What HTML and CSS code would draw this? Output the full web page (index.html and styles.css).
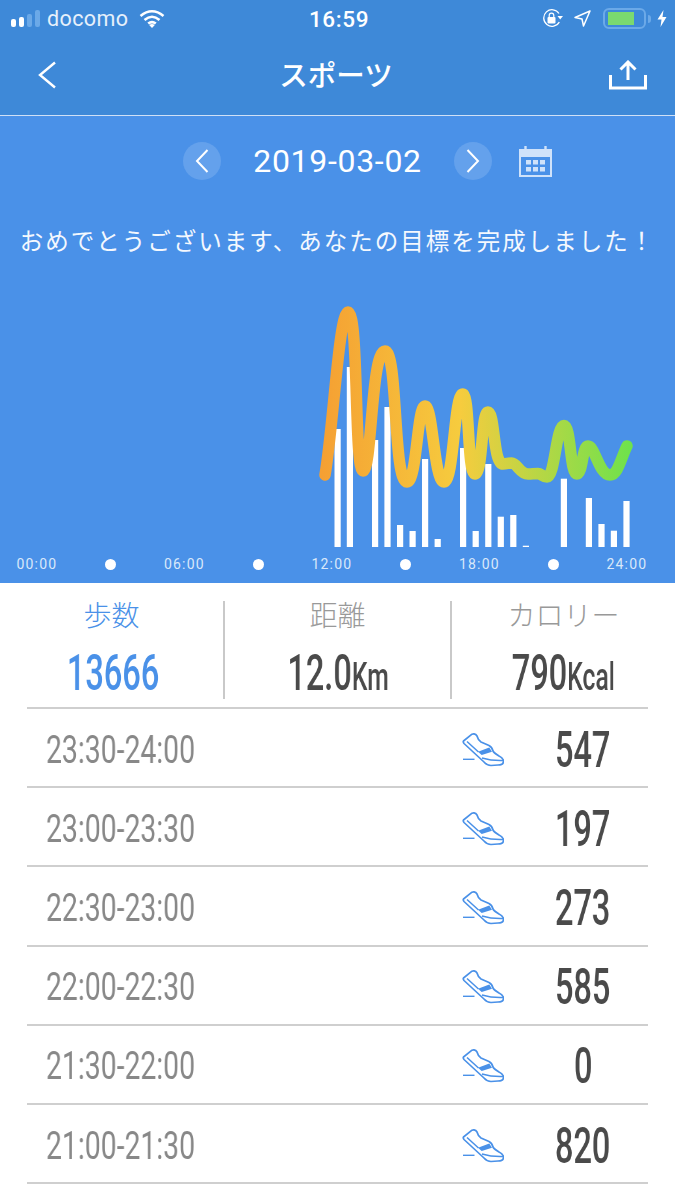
FILE: index.html
```html
<!DOCTYPE html>
<html lang="ja">
<head>
<meta charset="utf-8">
<title>スポーツ</title>
<link rel="stylesheet" href="styles.css">
</head>
<body>
<svg class="defs" width="0" height="0" aria-hidden="true">
  <symbol id="shoe" viewBox="0 0 42 34">
    <path d="M1.5 8 L10 1.2 Q13.5 0 15 3 Q16 7 19 9 L27 12.5 Q30 14 31 18 Q32 20 37 23 Q42 25.5 41.5 29 Q41 32 36 32 L29 32.5 Q25 32.5 22 29 L2 10.5 Q0.8 9 1.5 8 Z" fill="none" stroke="#4a91e8" stroke-width="1.7" stroke-linejoin="round"/>
    <path d="M5 8.5 L16.5 19 M20 25 Q30 28 41.5 27.5" fill="none" stroke="#4a91e8" stroke-width="1.5"/>
    <path d="M16 18.7 L27.3 14.5 L30 18.7 L19.7 22 Z" fill="#4a91e8"/>
    <path d="M1 26.3 H12.5" fill="none" stroke="#4a91e8" stroke-width="1.4"/>
  </symbol>
</svg>

<header class="top">
  <div class="status">
    <div class="status-left">
      <span class="signal"><i class="on s1"></i><i class="on s2"></i><i class="s3"></i><i class="s4"></i></span>
      <span class="carrier">docomo</span>
      <svg class="wifi" width="26" height="19" viewBox="0 0 26 19"><path d="M1.5 7 Q13 -2.5 24.5 7 M5.5 11 Q13 4.5 20.5 11 M9.2 14.6 Q13 11.5 16.8 14.6" fill="none" stroke="#fff" stroke-width="2.6"/><path d="M13 19 L10.2 16 Q13 14 15.8 16 Z" fill="#fff"/></svg>
    </div>
    <span class="clock">16:59</span>
    <div class="status-right">
      <svg class="lock" width="21" height="19" viewBox="0 0 21 19"><path d="M17 4.5 A8.3 8.3 0 1 0 17.3 13" fill="none" stroke="#fff" stroke-width="1.3"/><path d="M15.5 7 H21 L18.2 10.5 Z" fill="#fff"/><rect x="5.5" y="8" width="8" height="6.5" rx="1" fill="#fff"/><path d="M7.2 8 V6.5 A2.3 2.3 0 0 1 11.8 6.5 V8" fill="none" stroke="#fff" stroke-width="1.2"/></svg>
      <svg class="loc" width="17" height="17" viewBox="0 0 17 17"><path d="M16 1 L1 7.5 L8 9 L9.5 16 Z" fill="none" stroke="#fff" stroke-width="1.5" stroke-linejoin="round"/></svg>
      <span class="battery"><span class="level"></span></span>
      <span class="nub"></span>
      <svg class="bolt" width="10" height="17" viewBox="0 0 10 17"><path d="M6.5 0 L0.5 9.5 H4.5 L3.5 17 L9.5 7 H5.5 Z" fill="#fff"/></svg>
    </div>
  </div>
  <nav class="nav">
    <svg class="back" width="20" height="28" viewBox="0 0 20 28"><path d="M18 1.5 L3 14 L18 26.5" fill="none" stroke="#fff" stroke-width="2.4"/></svg>
    <h1 class="title">スポーツ</h1>
    <svg class="share" width="38" height="30" viewBox="0 0 38 30"><path d="M19 20 V3 M11.5 9.5 L19 2 L26.5 9.5" fill="none" stroke="#fff" stroke-width="3"/><path d="M1.5 15 V28 H36.5 V15" fill="none" stroke="#fff" stroke-width="3"/></svg>
  </nav>
</header>

<section class="panel">
  <div class="datebar">
    <span class="round"><svg width="14" height="26" viewBox="0 0 14 26"><path d="M12.5 2 L2 13 L12.5 24" fill="none" stroke="#fff" stroke-width="2"/></svg></span>
    <span class="date">2019-03-02</span>
    <span class="round"><svg width="14" height="26" viewBox="0 0 14 26"><path d="M1.5 2 L12 13 L1.5 24" fill="none" stroke="#fff" stroke-width="2"/></svg></span>
    <svg class="cal" width="33" height="31" viewBox="0 0 33 31"><path d="M1 4 H32 V30 H1 Z" fill="none" stroke="#cfe2fa" stroke-width="2"/><rect x="1" y="4" width="31" height="7" fill="#cfe2fa"/><path d="M6.5 0.5 V6 M26.5 0.5 V6" stroke="#cfe2fa" stroke-width="2.4" stroke-linecap="round"/><g fill="#cfe2fa"><rect x="7" y="14" width="5" height="4.5"/><rect x="14" y="14" width="5" height="4.5"/><rect x="21" y="14" width="5" height="4.5"/><rect x="7" y="21" width="5" height="4.5"/><rect x="14" y="21" width="5" height="4.5"/><rect x="21" y="21" width="5" height="4.5"/></g></svg>
  </div>
  <p class="msg">おめでとうございます、あなたの目標を完成しました！</p>
  <svg class="chart" width="675" height="262" viewBox="0 290 675 262">
    <defs>
      <linearGradient id="g" gradientUnits="userSpaceOnUse" x1="322" y1="0" x2="630" y2="0">
        <stop offset="0" stop-color="#f5a033"/>
        <stop offset="0.45" stop-color="#f6cc3e"/>
        <stop offset="1" stop-color="#6fe24c"/>
      </linearGradient>
    </defs>
    <g fill="#fff">
      <rect x="334.5" y="429" width="6.2" height="118"/>
      <rect x="346.8" y="367" width="6.2" height="180"/>
      <rect x="372" y="440" width="6.2" height="107"/>
      <rect x="384.4" y="407" width="6.2" height="140"/>
      <rect x="397" y="525" width="6.2" height="22"/>
      <rect x="409.5" y="531" width="6.2" height="16"/>
      <rect x="422" y="459" width="6.2" height="88"/>
      <rect x="434.6" y="539" width="6.2" height="8"/>
      <rect x="460" y="448" width="6.2" height="99"/>
      <rect x="472.6" y="531" width="6.2" height="16"/>
      <rect x="485.2" y="464" width="6.2" height="83"/>
      <rect x="497.7" y="516.7" width="6.2" height="30.3"/>
      <rect x="510.2" y="515" width="6.2" height="32"/>
      <rect x="522.8" y="545.7" width="6.2" height="1.3"/>
      <rect x="560.8" y="478.7" width="6.2" height="68.3"/>
      <rect x="585.8" y="498" width="6.2" height="49"/>
      <rect x="598.4" y="524" width="6.2" height="23"/>
      <rect x="610.8" y="530.7" width="6.2" height="16.3"/>
      <rect x="623.4" y="501" width="6.2" height="46"/>
    </g>
    <path fill="none" stroke="url(#g)" stroke-width="11.5" stroke-linecap="round" stroke-linejoin="round"
      d="M325 475 C333 430 339 312 348 312 C359 312 354 471 363 471 C372 471 371 351 385 351 C398 351 393 482 407 482 C417 482 417 406 425 406 C433 406 434 482 444 482 C454 482 454 394 462.7 394 C470 394 467 474 475 474 C483 474 481 412 488 412 C495 412 493 464 503 464 C507 464 508 463 511.7 463 C517 463 520 474 528 474 C532 474 534 473.5 538 473.5 C541 473.5 543 477 547 477 C555 477 556 425.5 564 425.5 C571 425.5 570 474 576.7 474 C583 474 582 446 588 446 C595 446 599 475 610 475 C618 475 621 458 627 446"/>
  </svg>
  <div class="axis">
    <span>00:00</span><i></i><span>06:00</span><i></i><span>12:00</span><i></i><span>18:00</span><i></i><span>24:00</span>
  </div>
</section>

<section class="stats">
  <div class="stat active">
    <div class="label">歩数</div>
    <div class="value"><span class="cond">13666</span></div>
  </div>
  <div class="stat">
    <div class="label">距離</div>
    <div class="value"><span class="cond">12.0<small>Km</small></span></div>
  </div>
  <div class="stat">
    <div class="label">カロリー</div>
    <div class="value"><span class="cond">790<small>Kcal</small></span></div>
  </div>
</section>

<ul class="rows">
  <li class="row"><span class="time"><span class="tcond">23:30-24:00</span></span><svg class="shoe" width="42" height="34"><use href="#shoe"/></svg><span class="num"><span class="cond">547</span></span></li>
  <li class="row"><span class="time"><span class="tcond">23:00-23:30</span></span><svg class="shoe" width="42" height="34"><use href="#shoe"/></svg><span class="num"><span class="cond">197</span></span></li>
  <li class="row"><span class="time"><span class="tcond">22:30-23:00</span></span><svg class="shoe" width="42" height="34"><use href="#shoe"/></svg><span class="num"><span class="cond">273</span></span></li>
  <li class="row"><span class="time"><span class="tcond">22:00-22:30</span></span><svg class="shoe" width="42" height="34"><use href="#shoe"/></svg><span class="num"><span class="cond">585</span></span></li>
  <li class="row"><span class="time"><span class="tcond">21:30-22:00</span></span><svg class="shoe" width="42" height="34"><use href="#shoe"/></svg><span class="num"><span class="cond">0</span></span></li>
  <li class="row"><span class="time"><span class="tcond">21:00-21:30</span></span><svg class="shoe" width="42" height="34"><use href="#shoe"/></svg><span class="num"><span class="cond">820</span></span></li>
</ul>
</body>
</html>
```
FILE: styles.css
```css
* { box-sizing: border-box; }
html, body { margin: 0; padding: 0; }
body {
  width: 675px;
  height: 1200px;
  overflow: hidden;
  background: #fff;
  font-family: "Roboto", "Noto Sans CJK JP", sans-serif;
}
.defs { display: block; height: 0; }

.top { background: #3e89d8; height: 116px; border-bottom: 1px solid #cfe0f6; color: #fff; }
.status { height: 37px; display: grid; grid-template-columns: 1fr auto 1fr; align-items: center; padding: 0 8px 0 11px; }
.status-left { display: flex; align-items: center; }
.signal { display: flex; align-items: flex-end; gap: 3px; height: 17px; margin-right: 7px; }
.signal i { display: block; width: 5px; border-radius: 2px; background: #6ba9e8; }
.signal .on { background: #fff; }
.s1 { height: 8px; }
.s2 { height: 10px; }
.s3 { height: 13px; }
.s4 { height: 17px; }
.carrier { font-size: 21.5px; letter-spacing: 0.4px; color: #e6f0fb; }
.wifi { margin-left: 11px; }
.clock { font-size: 22.5px; font-weight: 500; letter-spacing: 0.6px; }
.status-right { display: flex; align-items: center; justify-content: flex-end; }
.lock { margin-right: 11px; }
.loc { margin-right: 12px; }
.battery { display: flex; align-items: center; width: 43px; height: 21px; padding: 0 3px; border: 2px solid #6ba9e8; border-radius: 6px; }
.level { display: block; width: 26px; height: 13px; background: #7ad96f; }
.nub { width: 3px; height: 8px; margin-left: 2px; border-radius: 0 3px 3px 0; background: #6ba9e8; }
.bolt { margin-left: 6px; }

.nav { height: 78px; display: flex; align-items: center; justify-content: space-between; padding: 0 28px 0 37px; position: relative; }
.back { margin-top: -3px; }
.share { margin-top: -2px; }
.title { margin: -3px 0 0 6px; font-family: "Noto Sans CJK JP", sans-serif; font-size: 28.5px; font-weight: 500; line-height: 1; letter-spacing: 0; }

.panel { background: #4a91e8; height: 467px; color: #fff; }
.datebar { display: flex; align-items: center; padding: 26px 0 0 183px; height: 64px; }
.round { display: flex; align-items: center; justify-content: center; width: 38px; height: 38px; border-radius: 50%; background: #64a1ec; }
.date { font-size: 32px; font-weight: 400; margin: 0; text-align: center; width: 233px; letter-spacing: 0.7px; }
.cal { margin-left: 27px; }
.msg { margin: 45px 0 0; text-align: center; font-family: "Noto Sans CJK JP", sans-serif; font-size: 23.5px; letter-spacing: 2px; line-height: 30px; font-weight: 400; color: #f4f8fe; white-space: nowrap; }
.chart { display: block; margin-top: 35px; }
.axis { display: grid; grid-template-columns: repeat(9, 73.75px); align-items: center; justify-items: center; height: 26px; margin-top: -1px; }
.axis span { font-size: 14px; letter-spacing: 1.2px; color: #d9e8fa; }
.axis i { display: block; width: 11px; height: 11px; border-radius: 50%; background: #fff; }

.stats { display: grid; grid-template-columns: 225px 227px 223px; height: 124px; padding-top: 18px; }
.stat { height: 98px; text-align: center; border-right: 2px solid #c9c9c9; color: #4a4a4a; }
.stat:last-child { border-right: 0; }
.label { margin-top: -3px; font-family: "Noto Sans CJK JP", sans-serif; font-size: 28px; font-weight: 300; line-height: 32px; color: #999; }
.value { height: 52px; margin-top: 17px; display: flex; align-items: center; justify-content: center; font-size: 50px; font-weight: 500; line-height: 1; white-space: nowrap; }
.cond { display: inline-block; transform: scaleX(0.65); will-change: transform; }
.cond small { font-size: 38px; }
.active .label, .active .value { color: #4a91e8; }
.active .value { padding-left: 3px; }

.rows { list-style: none; margin: 0 27px; padding: 0; border-top: 2px solid #cfcfcf; }
.row { display: flex; align-items: center; height: 79.2px; padding-top: 4px; border-bottom: 2px solid #cfcfcf; }
.time { width: 435px; padding-left: 19px; font-size: 38px; color: #888; white-space: nowrap; }
.tcond { display: inline-block; transform: scaleX(0.746); transform-origin: left center; will-change: transform; }
.shoe { flex: none; }
.num { flex: 1; padding-left: 14px; text-align: center; font-size: 50px; font-weight: 500; color: #4a4a4a; line-height: 1; }
```
